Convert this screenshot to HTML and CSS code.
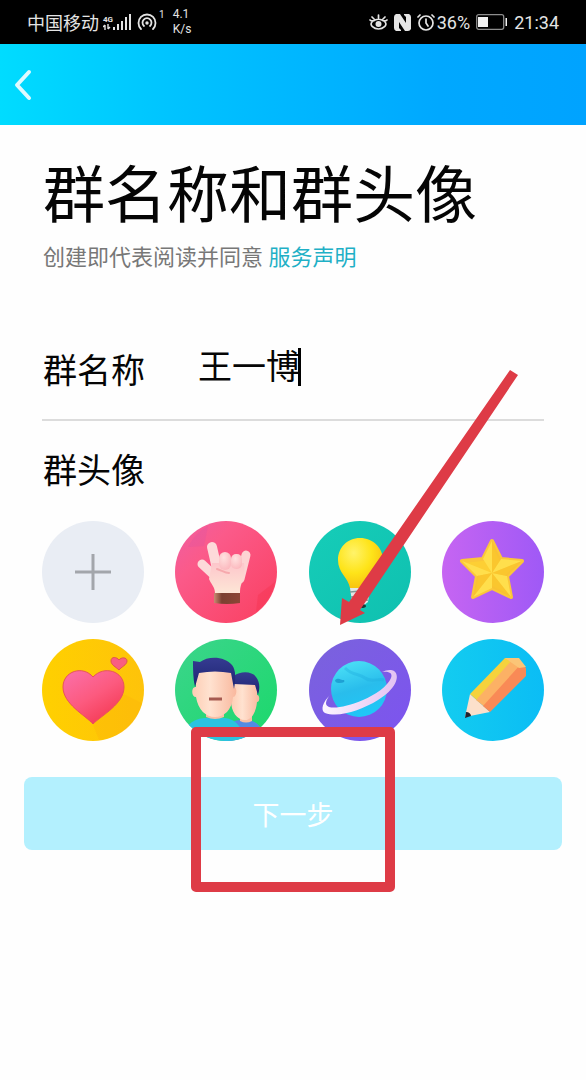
FILE: index.html
```
<!DOCTYPE html>
<html lang="zh-CN">
<head>
	<meta charset="utf-8">
	<meta name="viewport" content="width=device-width, initial-scale=1">
	<title>群名称和群头像</title>
	<link rel="stylesheet" href="styles.css">
</head>
<body>
	<div class="status">
		<div class="status-left">
			<span class="carrier">中国移动</span>
			<span class="net">
				<b>4G</b>
				<svg width="8" height="6" viewBox="0 0 8 6"><path d="M2 6V1M0 3l2-2M5 0v5M7 3L5 5" stroke="#e4e4e4" stroke-width="1.4" fill="none"/></svg>
			</span>
			<svg class="signal" width="18" height="18" viewBox="0 0 18 18" fill="#e4e4e4">
				<path d="M0 14h2v3H0zM4 11h2v6H4zM8 8h2v9H8zM12 4h2v13h-2zM16 1h2v16h-2z"/>
			</svg>
			<svg class="hotspot" width="20" height="18" viewBox="0 0 20 18" fill="none" stroke="#e4e4e4" stroke-width="1.8" stroke-linecap="round">
				<path d="M4 16a8.500 8.500 0 1 1 12 0M7 13a4.500 4.500 0 1 1 6 0"/>
				<circle cx="10" cy="10" r="1.700" fill="#e4e4e4" stroke="none"/>
			</svg>
			<sup class="clients">1</sup>
			<span class="speed">4.1<br>K/s</span>
		</div>
		<div class="status-right">
			<svg width="19" height="16" viewBox="0 0 19 16" fill="none" stroke="#e4e4e4" stroke-width="1.7" stroke-linecap="round">
				<path d="M1 6c2 2 3 1 5 0q3.500-1.500 7 0c2 1 3 2 5 0M3 8c-3 3 2 7 6.500 7S19 11 16 8M9.500 1v3M3 3l2 2M16 3l-2 2"/>
				<circle cx="9.500" cy="10" r="3" fill="#e4e4e4" stroke="none"/>
			</svg>
			<svg width="17" height="17" viewBox="0 0 17 17">
				<path d="M2 0h4l6 9V3l-2-2V0h5q2 1 2 3v12q-1 2-3 2h-3L5 8v6l2 2v1H2q-2-1-2-3V3q0-2 2-3z" fill="#e4e4e4"/>
			</svg>
			<svg width="18" height="17" viewBox="0 0 18 17" fill="none" stroke="#e4e4e4" stroke-width="1.700" stroke-linecap="round">
				<circle cx="9" cy="9" r="7"/>
				<path d="M9 5v4l2 3M1 3l2-2M17 3l-2-2"/>
			</svg>
			<span class="percent">36%</span>
			<svg class="battery" width="32" height="16" viewBox="0 0 32 16">
				<rect x=".7" y=".7" width="27" height="14.600" rx="2" fill="none" stroke="#8d8d8d" stroke-width="1.300"/>
				<path d="M2 3h10v10H2zM29.500 4H31v8h-1.500z" fill="#f2f2f2"/>
			</svg>
			<span class="time">21:34</span>
		</div>
	</div>

	<div class="nav">
		<button class="back" type="button" aria-label="返回">
			<svg width="18" height="32" viewBox="0 0 18 32"><path d="M15 3L3 16l12 13" fill="none" stroke="#dffaff" stroke-width="4" stroke-linecap="round" stroke-linejoin="round"/></svg>
		</button>
	</div>

	<form class="main">
		<h1>群名称和群头像</h1>
		<p class="tip">创建即代表阅读并同意 <a href="#">服务声明</a></p>

		<div class="field">
			<label for="name">群名称</label>
			<input id="name" type="text" value="王一博">
			<span class="caret"></span>
		</div>

		<h2>群头像</h2>
		<div class="avatars">
			<button type="button" aria-label="添加">
				<svg viewBox="0 0 102 102">
					<circle cx="51" cy="51" r="51" fill="#e9edf4"/>
					<path d="M51 33v36M33 51h36" stroke="#a3a6ab" stroke-width="3"/>
				</svg>
			</button>

			<button type="button" aria-label="手势">
				<svg viewBox="0 0 102 102">
					<defs>
						<linearGradient id="pink" x1="0" y1="0" x2="1" y2="1"><stop offset="0" stop-color="#ee5fa5"/><stop offset=".3" stop-color="#fb5a8a"/><stop offset="1" stop-color="#fa3f5f"/></linearGradient>
						<linearGradient id="palm" x1="0" y1="0" x2="0" y2="1"><stop offset="0" stop-color="#fdc6cb"/><stop offset="1" stop-color="#fde6d6"/></linearGradient>
						<radialGradient id="knuckle" cx=".4" cy=".3" r=".8"><stop offset="0" stop-color="#ffe2e0"/><stop offset="1" stop-color="#fbb5bb"/></radialGradient>
						<linearGradient id="cuff"><stop offset="0" stop-color="#c98a72"/><stop offset=".3" stop-color="#7b4031"/><stop offset="1" stop-color="#8c4636"/></linearGradient>
					</defs>
					<circle cx="51" cy="51" r="51" fill="url(#pink)"/>
					<path d="M13 26Q20 12 33 5l-4 20z" fill="#d94fa5" opacity=".25"/>
					<path d="M100 61Q96 80 81 91l2-17z" fill="#f52b46" opacity=".3"/>
					<g fill="none" stroke-linecap="round">
						<path d="M71 34l-6 24" stroke="#fdd3d3" stroke-width="9"/>
						<path d="M37 26l6 26" stroke="#fddada" stroke-width="10"/>
						<path d="M27 43l15 14" stroke="#fddada" stroke-width="9"/>
					</g>
					<path d="M37 42h32c1 8 0 15-2 19-2 5-2 8-2 11H40c0-6-4-9-6-14z" fill="url(#palm)"/>
					<rect x="44" y="31" width="12" height="18" rx="6" fill="url(#knuckle)"/>
					<rect x="56" y="33" width="11" height="15" rx="5" fill="url(#knuckle)"/>
					<path d="M42 48c4 1 8 4 12 4" fill="none" stroke="#f6a9ad" stroke-width="2" stroke-linecap="round"/>
					<path d="M39 72h26v10q-13 2-26 0z" fill="url(#cuff)"/>
				</svg>
			</button>

			<button type="button" aria-label="灯泡">
				<svg viewBox="0 0 102 102">
					<defs>
						<linearGradient id="teal" x1="0" y1="0" x2="1" y2="1"><stop offset="0" stop-color="#16cdb8"/><stop offset="1" stop-color="#0fc0b0"/></linearGradient>
						<radialGradient id="bulb" cx=".35" cy=".3" r=".8"><stop offset="0" stop-color="#fff36a"/><stop offset=".5" stop-color="#fee419"/><stop offset="1" stop-color="#f6b90c"/></radialGradient>
					</defs>
					<circle cx="51" cy="51" r="51" fill="url(#teal)"/>
					<path d="M51 17c13 0 23 10 23 22 0 13-10 17-13 28H41c-2-11-12-15-12-28 0-12 9-22 22-22z" fill="url(#bulb)"/>
					<path d="M41 67h20l-2 14-5 4h-6l-5-4z" fill="#e2e6e5"/>
					<path d="M41 71l20-2M42 76l19-2M43 81l16-2" stroke="#7f9a98" stroke-width="1.500"/>
					<ellipse cx="52" cy="85" rx="5" ry="2" fill="#173b3a"/>
				</svg>
			</button>

			<button type="button" aria-label="星星">
				<svg viewBox="0 0 102 102">
					<defs>
						<linearGradient id="violet"><stop offset="0" stop-color="#c665f2"/><stop offset="1" stop-color="#9f59f6"/></linearGradient>
					</defs>
					<circle cx="51" cy="51" r="51" fill="url(#violet)"/>
					<path d="M50 20l9 18 21 2-15 15 4 21-19-9-19 9 4-21-15-15 21-2z" fill="#fdcf34" stroke="#fbc63a" stroke-width="4" stroke-linejoin="round"/>
					<path d="M50 20v32l-9-14zM80 40L50 52l9-14zM69 76L50 52l15 3zM31 76l19-24v15zM20 40l30 12-15 3z" fill="#ffdf4c"/>
					<path d="M50 20v32l9-14zM80 40L50 52l15 3zM69 76L50 52v15zM31 76l19-24-15 3z" fill="#f9bf2c" opacity=".6"/>
				</svg>
			</button>

			<button type="button" aria-label="爱心">
				<svg viewBox="0 0 102 102">
					<defs>
						<linearGradient id="amber"><stop offset="0" stop-color="#ffd000"/><stop offset="1" stop-color="#fec30a"/></linearGradient>
						<linearGradient id="heart" x1=".1" y1="0" x2=".8" y2="1"><stop offset="0" stop-color="#fb6fa8"/><stop offset=".5" stop-color="#fc5a7f"/><stop offset="1" stop-color="#f4364e"/></linearGradient>
					</defs>
					<circle cx="51" cy="51" r="51" fill="url(#amber)"/>
					<path d="M51 86l31-31 18 9Q92 96 57 101z" fill="#fbae0b" opacity=".3"/>
					<path d="M51 85C43 76 21 65 21 48c0-16 20-22 30-10 11-12 31-6 31 10 0 17-22 28-31 37z" fill="url(#heart)" stroke="#e8525c" stroke-width="1"/>
					<path d="M77 31c-3-3-8-5-8-9 0-5 6-4 8-1 2-3 8-3 8 1 0 4-6 6-8 9z" fill="#f95e81" stroke="#e0554f" stroke-width="1"/>
				</svg>
			</button>

			<button type="button" aria-label="朋友">
				<svg viewBox="0 0 102 102">
					<defs>
						<linearGradient id="green" x1="0" y1="0" x2="1" y2="1"><stop offset="0" stop-color="#3cd58c"/><stop offset="1" stop-color="#1bd86b"/></linearGradient>
						<linearGradient id="face" x1="0" y1="0" x2="1" y2="0"><stop offset="0" stop-color="#fdcdb4"/><stop offset=".4" stop-color="#ffe2d0"/><stop offset="1" stop-color="#f9b89e"/></linearGradient>
						<linearGradient id="hair" x1="0" y1="0" x2="0" y2="1"><stop offset="0" stop-color="#353b91"/><stop offset="1" stop-color="#1c2370"/></linearGradient>
						<clipPath id="disc"><circle cx="51" cy="51" r="51"/></clipPath>
					</defs>
					<circle cx="51" cy="51" r="51" fill="url(#green)"/>
					<g clip-path="url(#disc)">
						<path d="M49 102c0-14 6-20 16-21h9c9 2 14 8 16 21z" fill="#528be4"/>
						<path d="M65 73h12v9q-6 3-12 0z" fill="#f8bea5"/>
						<path d="M56 42h26v14c3 0 3 7 0 7-1 11-6 18-12 18-8 0-14-8-14-20z" fill="url(#face)"/>
						<path d="M59 37c6-5 18-5 22 1 4 5 4 11 2 18l-3-10-21-1z" fill="url(#hair)"/>
						<path d="M7 102c2-16 11-22 23-23h20c11 1 18 10 19 23z" fill="#2bc3e0"/>
						<path d="M31 66h18v12q-9 4-18 0z" fill="#f8bea5"/>
						<path d="M21 30h37v18c5-1 4 10 0 10-1 13-9 20-18 20S23 71 21 58c-5 0-5-11 0-10z" fill="url(#face)"/>
						<path d="M18 22l7 1c9-7 26-5 32 3 4 5 4 14 2 24l-3-16q-16-3-32 0l-4 14c-2-8-2-18-2-26z" fill="url(#hair)"/>
						<path d="M34 60h13" stroke="#a65a50" stroke-width="3" fill="none"/>
					</g>
				</svg>
			</button>

			<button type="button" aria-label="星球">
				<svg viewBox="0 0 102 102">
					<defs>
						<linearGradient id="indigo" x1="0" y1="0" x2="1" y2="1"><stop offset="0" stop-color="#7a63dc"/><stop offset="1" stop-color="#7d53f0"/></linearGradient>
						<linearGradient id="planet" x1=".3" y1="0" x2=".6" y2="1"><stop offset="0" stop-color="#4be0f6"/><stop offset=".5" stop-color="#29bdec"/><stop offset="1" stop-color="#1fc8f8"/></linearGradient>
						<linearGradient id="ring"><stop offset="0" stop-color="#fbf4ff"/><stop offset="1" stop-color="#e3c2f2"/></linearGradient>
					</defs>
					<circle cx="51" cy="51" r="51" fill="url(#indigo)"/>
					<circle cx="50" cy="50" r="28" fill="url(#planet)"/>
					<path d="M26 41c4-3 5 0 9 0q2 3-5 3-4 0-4-3z" fill="#148fc9" opacity=".7"/>
					<path d="M36 29c8 8 14 5 20 10s14 0 19 2" fill="none" stroke="#1eaade" stroke-width="3" opacity=".35"/>
					<path d="M21 56C14 63 11 71 16 74c14 5 37-3 53-13 17-10 23-24 16-29-3-2-8-1-12 1 7-1 11 1 9 6-3 8-16 17-28 22-14 6-28 9-34 7-5-2-3-7 1-12z" fill="url(#ring)"/>
				</svg>
			</button>

			<button type="button" aria-label="铅笔">
				<svg viewBox="0 0 102 102">
					<defs>
						<linearGradient id="sky"><stop offset="0" stop-color="#13ccf0"/><stop offset="1" stop-color="#0bbdf5"/></linearGradient>
					</defs>
					<circle cx="51" cy="51" r="51" fill="url(#sky)"/>
					<path d="M28 55l-5 23 25-5z" fill="#fce0cb"/>
					<path d="M28 55l35-36 11 1-38 42z" fill="#f5d23c"/>
					<path d="M34 61l37-41 9 7-36 42z" fill="#fcb165"/>
					<path d="M41 67l38-42 5 4v8L48 73z" fill="#f98a56"/>
					<path d="M63 19h14l7 9-7 1z" fill="#fbc577"/>
					<path d="M24 73l-1 6 6-2c0-2-2-4-5-4z" fill="#20222e"/>
				</svg>
			</button>

			<svg class="arrow" width="185" height="262" viewBox="0 0 185 262"><path d="M175 3l8 5L25 243l5 3-25 12 2-27 7 4z" fill="#de3b46"/></svg>
		</div>

		<div class="submit">
			<button type="submit">下一步</button>
			<div class="mark"></div>
		</div>
	</form>
</body>
</html>
```
FILE: styles.css
```
*{
	margin: 0;
	padding: 0;
	box-sizing: border-box;
}
body{
	background: #fefefe;
	color: #050505;
	font-family: Roboto, "Noto Sans CJK SC", sans-serif;
}
button{
	border: none;
	background: none;
	font-family: inherit;
	cursor: pointer;
}
svg{
	display: block;
}

/* 状态栏 */
.status{
	display: flex;
	justify-content: space-between;
	height: 44px;
	padding: 0 27px;
	background: #000;
	color: #e4e4e4;
}
.status-left,
.status-right{
	display: flex;
	align-items: center;
}
.carrier{
	font-size: 18px;
}
.net{
	margin-left: 4px;
}
.net b{
	display: block;
	font-size: 8px;
	line-height: 9px;
}
.hotspot{
	margin-left: 6px;
}
.clients{
	margin: 0 8px 14px 2px;
	font-size: 10px;
	line-height: 12px;
}
.speed{
	font-size: 12px;
	line-height: 15px;
}
.status-right{
	gap: 6px;
}
.percent,
.time{
	font-size: 18px;
}
.percent{
	margin-left: -4px;
}

/* 导航 */
.nav{
	display: flex;
	align-items: center;
	height: 81px;
	padding-left: 14px;
	background: linear-gradient(to right, #00dcff, #00c3ff 30%, #00a8ff 75%, #00a3ff);
}

.main{
	padding: 34px 42px 48px;
}
h1{
	font-size: 62px;
	font-weight: 400;
	line-height: 76px;
	white-space: nowrap;
}
.tip{
	margin-top: 8px;
	font-size: 22px;
	line-height: 30px;
	color: #777;
}
.tip a{
	color: #1fb0c6;
	text-decoration: none;
}
h1,
.tip,
.field label,
h2{
	padding-left: 1px;
}
.field{
	display: flex;
	align-items: center;
	height: 102px;
	margin-top: 46px;
	border-bottom: 2px solid #dcdcdc;
}
.field label,
.field input,
h2{
	font-size: 34px;
	font-weight: 400;
	line-height: 48px;
}
.field label{
	margin-top: 4px;
}
.field input{
	width: 102px;
	margin: 0 0 4px 53px;
	border: none;
	outline: none;
	background: none;
	color: inherit;
	font-family: inherit;
}
.caret{
	width: 3px;
	height: 38px;
	margin: 0 0 4px -2px;
	background: #000;
}
h2{
	margin-top: 26px;
}

/* 头像 */
.avatars{
	position: relative;
	display: grid;
	grid-template-columns: repeat(4, 102px);
	justify-content: space-between;
	row-gap: 16px;
	margin-top: 26px;
}
.avatars button{
	height: 102px;
	border-radius: 50%;
}
.arrow{
	position: absolute;
	top: -154px;
	right: 24px;
	pointer-events: none;
}

/* 下一步 */
.submit{
	position: relative;
	margin: 36px -18px 0;
}
.submit button{
	display: block;
	width: 100%;
	height: 73px;
	border-radius: 8px;
	background: #b3f0fe;
	color: #fff;
	font-size: 27px;
}
.mark{
	position: absolute;
	top: -50px;
	left: 50%;
	width: 204px;
	height: 165px;
	border: 10px solid #de3b46;
	border-radius: 5px;
	transform: translateX(-50%);
	pointer-events: none;
}
```
